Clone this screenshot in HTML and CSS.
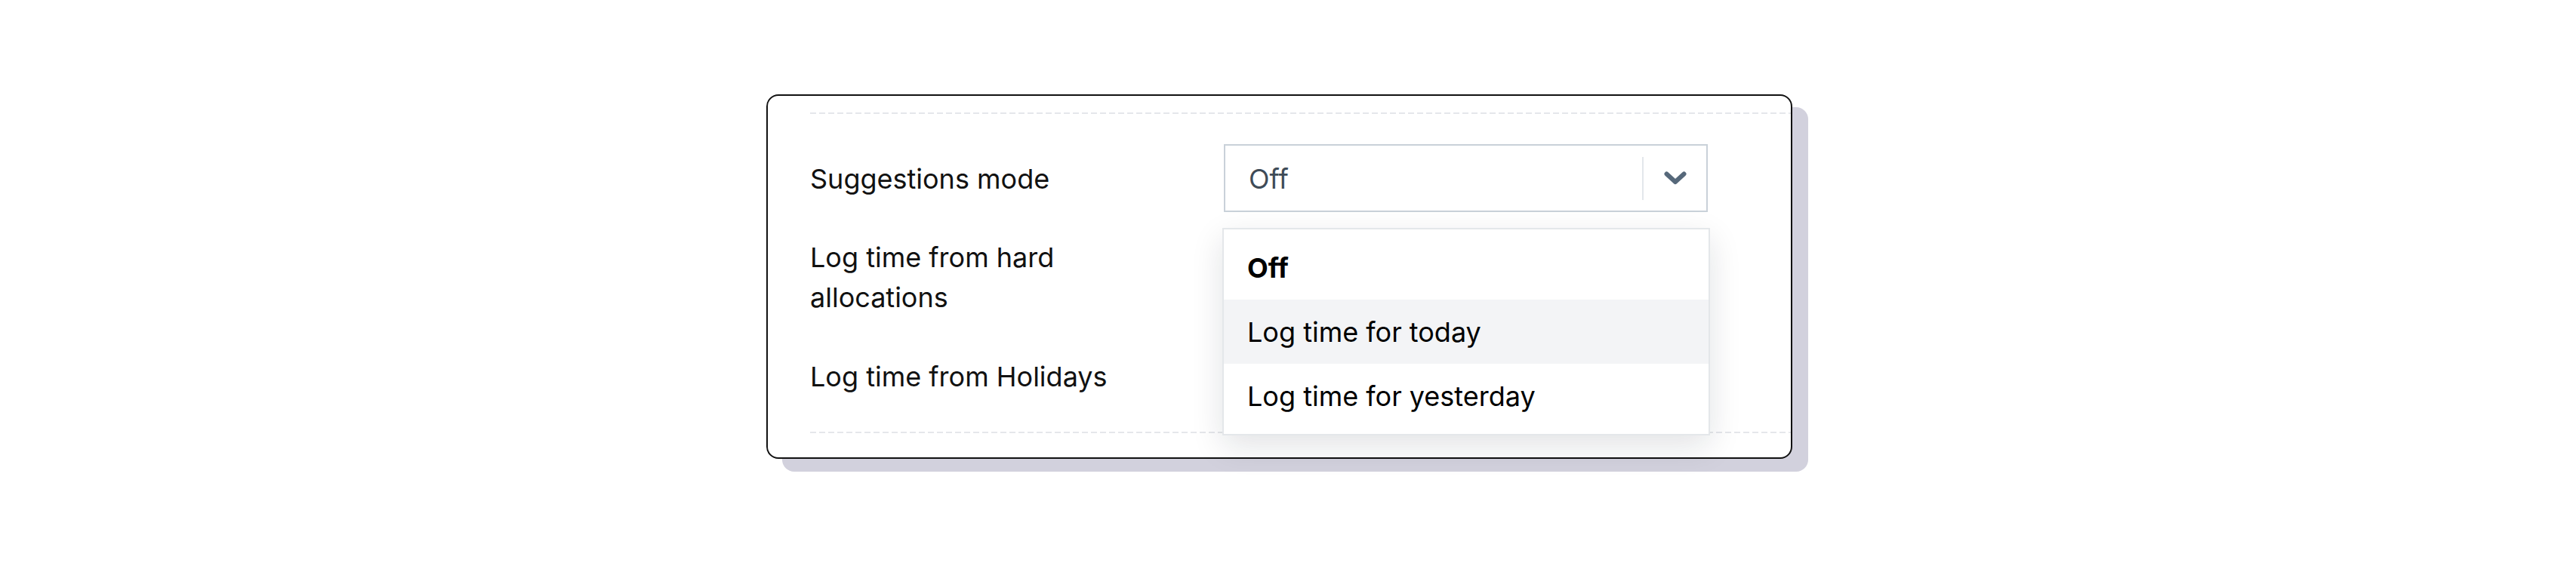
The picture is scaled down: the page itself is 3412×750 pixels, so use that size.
FILE: index.html
```html
<!DOCTYPE html>
<html lang="en">
<head>
    <meta charset="UTF-8">
    <meta name="viewport" content="width=device-width, initial-scale=1.0">
    <title>Time logging settings</title>
    <link rel="stylesheet" href="styles.css">
</head>
<body>
    <div class="card">
        <div class="settings">
            <div class="setting-label">Suggestions mode</div>
            <div class="setting-control">
                <div class="select">
                    <span class="select-value">Off</span>
                    <span class="select-divider"></span>
                    <span class="select-indicator">
                        <svg width="30" height="18" viewBox="0 0 30 18">
                            <path d="M3.5 3.5 L15 14 L26.5 3.5" fill="none" stroke="#56687a" stroke-width="6" stroke-linecap="round" stroke-linejoin="round"/>
                        </svg>
                    </span>
                </div>
                <ul class="menu">
                    <li class="menu-item selected">Off</li>
                    <li class="menu-item focused">Log time for today</li>
                    <li class="menu-item">Log time for yesterday</li>
                </ul>
            </div>

            <div class="setting-label">Log time from hard<br>allocations</div>
            <div class="setting-control"></div>

            <div class="setting-label">Log time from Holidays</div>
            <div class="setting-control"></div>
        </div>
    </div>
</body>
</html>
```

FILE: styles.css
```css
:root {
    --text-color: #111;
    --muted-text: #3f4b57;
    --line-color: #e5e7eb;
    --select-border: #c9d1d9;
    --hover-color: #f3f4f6;
    --shadow-color: #d2d1dd;
}

* {
    margin: 0;
    padding: 0;
    box-sizing: border-box;
}

body {
    font-family: Inter, 'Noto Sans', sans-serif;
    font-size: 36px;
    color: var(--text-color);
    background-color: #fff;
    display: flex;
    justify-content: center;
    align-items: center;
    min-height: 100vh;
    padding: 0 23px 17px 0;
}

.card {
    width: 1359px;
    background-color: #fff;
    border: 2px solid #111;
    border-radius: 16px;
    box-shadow: 21px 17px 0 0 var(--shadow-color);
    padding: 22px 0 32px 56px;
}

.settings {
    display: grid;
    grid-template-columns: 548px 641px;
    grid-auto-rows: 104px;
    row-gap: 27px;
    align-items: center;
    padding: 35px 0 24px;
    background-image:
        repeating-linear-gradient(to right, var(--line-color) 0 8px, transparent 8px 12px),
        repeating-linear-gradient(to right, var(--line-color) 0 8px, transparent 8px 12px);
    background-size: 100% 2px;
    background-position: top left, bottom left;
    background-repeat: no-repeat;
}

.setting-label {
    line-height: 53px;
    padding-top: 2px;
}

.setting-control {
    position: relative;
}

.select {
    display: flex;
    align-items: stretch;
    height: 90px;
    border: 2px solid var(--select-border);
    background-color: #fff;
}

.select-value {
    flex: 1;
    display: flex;
    align-items: center;
    padding: 2px 0 0 31px;
    color: var(--muted-text);
}

.select-divider {
    width: 2px;
    margin: 15px 0 14px;
    background-color: #e3e7eb;
}

.select-indicator {
    width: 83px;
    display: flex;
    align-items: center;
    justify-content: center;
}

.menu {
    position: absolute;
    top: 111px;
    left: -2px;
    right: -3px;
    list-style: none;
    background-color: #fff;
    border: 2px solid #e4e7ea;
    padding: 8px 0;
    box-shadow: 0 14px 40px rgba(17, 24, 39, 0.12);
    z-index: 2;
}

.menu-item {
    padding: 17px 31px 15px;
    line-height: 53px;
    color: #000;
}

.menu-item.selected {
    font-weight: 700;
}

.menu-item.focused {
    background-color: var(--hover-color);
}
```
